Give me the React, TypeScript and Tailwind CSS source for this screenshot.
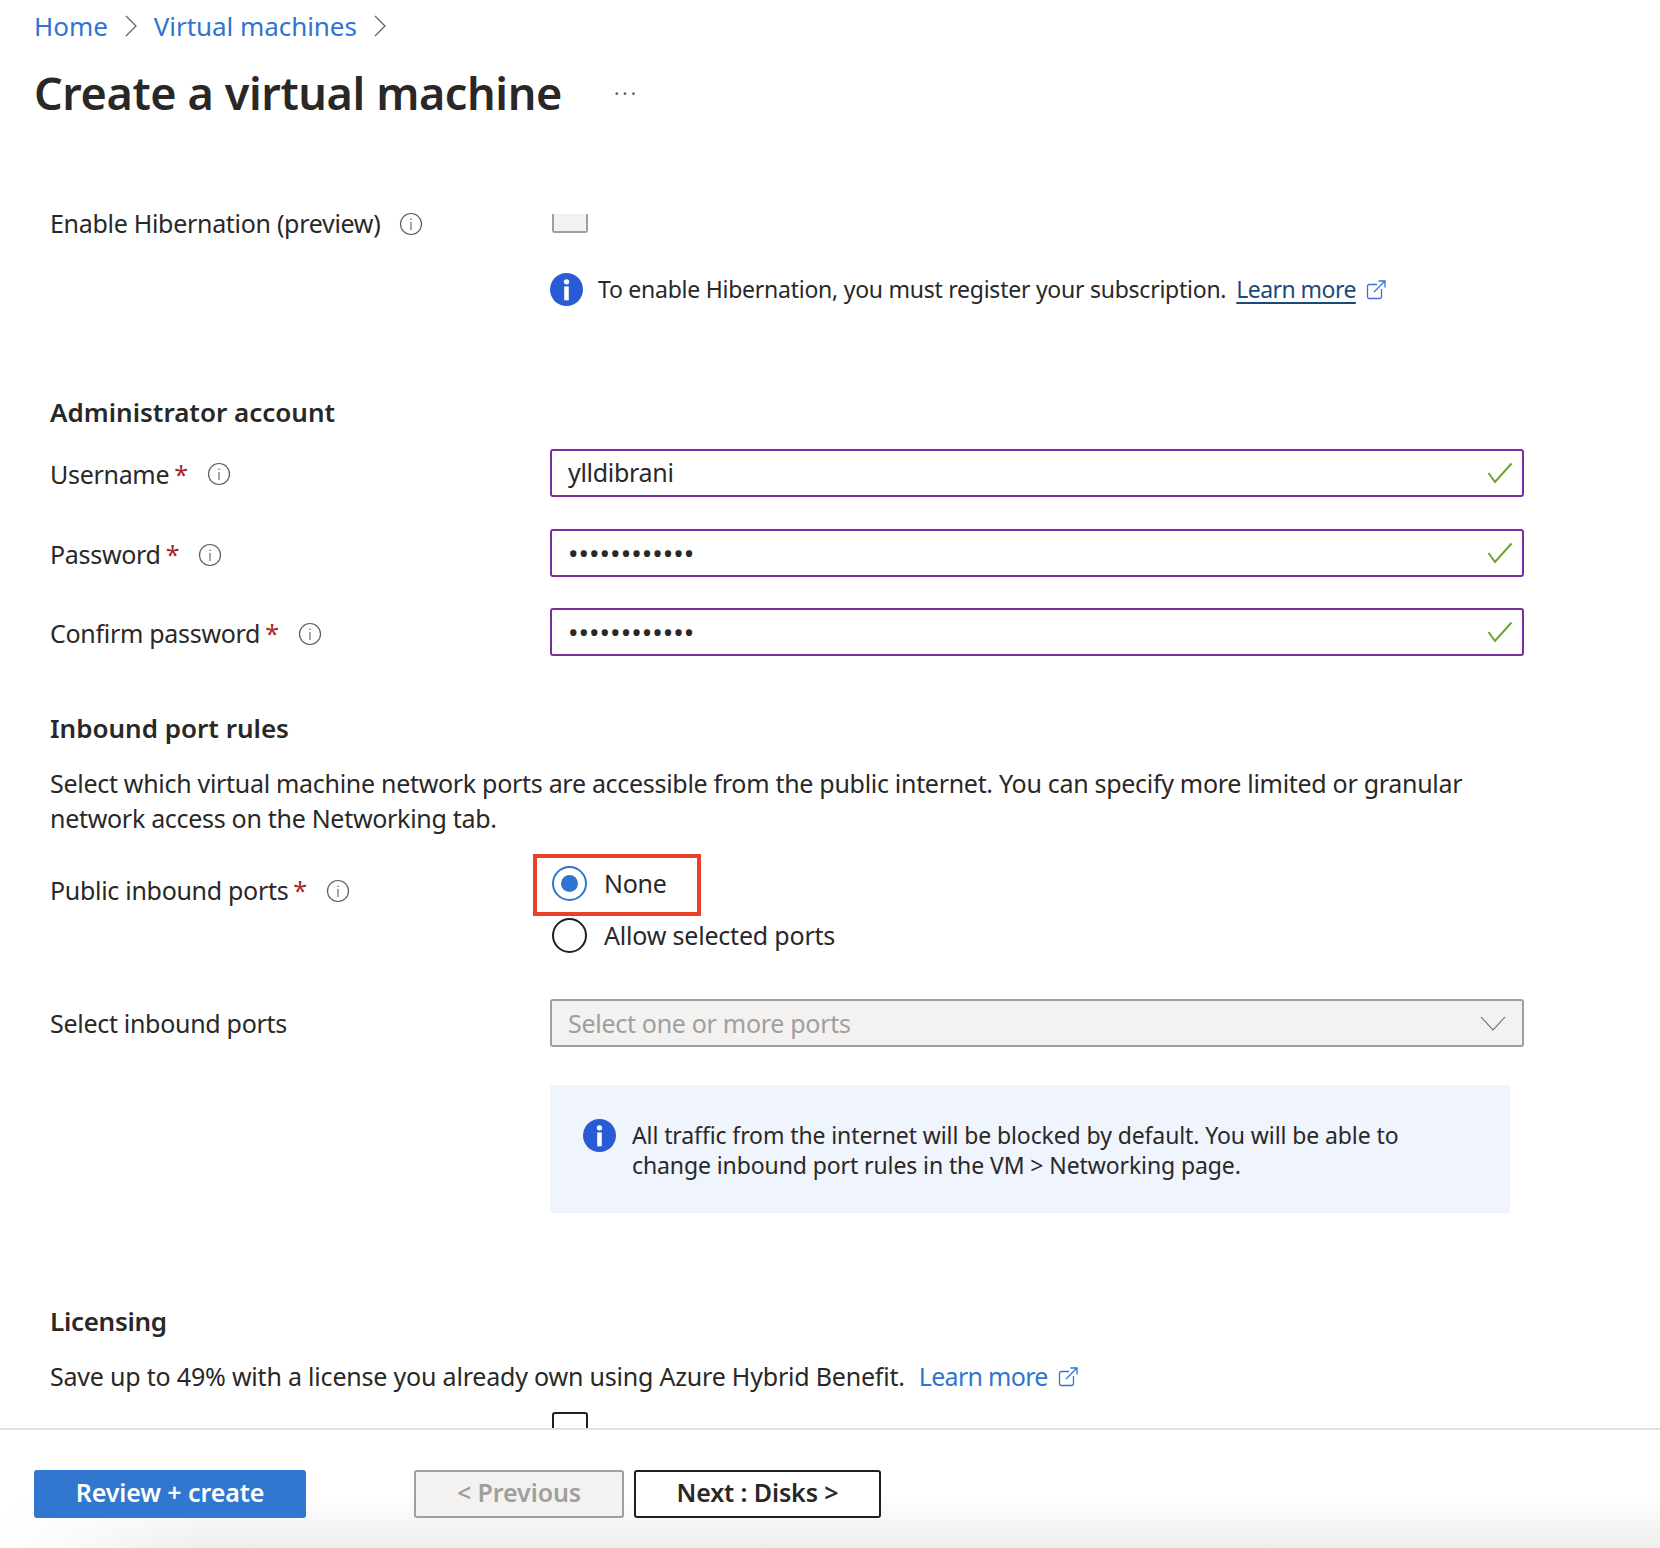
const font = "font-['Noto_Sans','Open_Sans',sans-serif]";

function SmallInfo() {
  return (
    <svg width="24" height="24" viewBox="0 0 24 24" fill="none" className="shrink-0">
      <circle cx="12" cy="12" r="10.5" stroke="#605e5c" strokeWidth="1.2" />
      <circle cx="12" cy="7.2" r="0.8" fill="#605e5c" />
      <path d="M12 10v8" stroke="#605e5c" strokeWidth="1.1" />
    </svg>
  );
}

function BlueInfo() {
  return (
    <svg width="33" height="33" viewBox="0 0 32 32" className="shrink-0">
      <circle cx="16" cy="16" r="16" fill="#285cd6" />
      <circle cx="16" cy="8.6" r="2.6" fill="#fff" />
      <rect x="13.8" y="13" width="4.4" height="13.5" fill="#fff" />
    </svg>
  );
}

function ExternalLink({ color = '#3b6fe0' }: { color?: string }) {
  return (
    <svg width="20" height="20" viewBox="0 0 20 20" fill="none" className="shrink-0">
      <path d="M11 4.500H3.200A1.700 1.700 0 0 0 1.500 6.200v10.600a1.700 1.700 0 0 0 1.700 1.700h10.600a1.700 1.700 0 0 0 1.700-1.700V9" stroke={color} strokeWidth="1.3" />
      <path d="M8 12 18.500 1.500M12.500 1h6.500v6.500" stroke={color} strokeWidth="1.3" />
    </svg>
  );
}

function Check() {
  return (
    <svg width="26" height="22" viewBox="0 0 26 22" fill="none">
      <path d="M1.500 11 8 20 24.500 1.500" stroke="#6aa232" strokeWidth="2" />
    </svg>
  );
}

function Chevron() {
  return (
    <svg width="16" height="26" viewBox="0 0 16 26" fill="none" className="shrink-0">
      <path d="M3 3 13 13 3 23" stroke="#605e5c" strokeWidth="1.200" />
    </svg>
  );
}

function FieldLabel({ text, required }: { text: string; required?: boolean }) {
  return (
    <div className="flex items-center gap-[19px]">
      <span>
        {text}
        {required && <span className="ml-[5px] text-[#a4262c]">*</span>}
      </span>
      <SmallInfo />
    </div>
  );
}

function ValidInput({ children }: { children: React.ReactNode }) {
  return (
    <div className="flex h-[48px] w-[974px] items-center justify-between rounded-[3px] border-2 border-[#7b2f9e] pl-[16px] pr-[9px]">
      {children}
      <Check />
    </div>
  );
}

function PasswordDots() {
  return <span className="text-[28px] tracking-normal">••••••••••••</span>;
}

export default function App() {
  return (
    <div className={`${font} flex h-[1548px] w-[1660px] flex-col overflow-hidden bg-white text-[25px] leading-[35px] tracking-[-0.3px] text-[#292827]`}>
      <main className="flex-1 overflow-hidden">
        <nav className="flex h-[52px] items-center gap-[15px] pl-[34px] text-[26px] tracking-[-0.05px] text-[#2f74d0]">
          <a>Home</a>
          <Chevron />
          <a>Virtual machines</a>
          <Chevron />
        </nav>
        <div className="mt-[11px] flex h-[60px] items-center pl-[34px]">
          <h1 className="text-[45px] font-semibold leading-[60px] tracking-[-0.4px]">Create a virtual machine</h1>
          <span className="ml-[52px] text-[20px] tracking-[3px] text-[#605e5c]">···</span>
        </div>

        <div className="pl-[50px]">
          <div className="mt-[83px] grid h-[35px] grid-cols-[500px_1fr] items-start">
            <FieldLabel text="Enable Hibernation (preview)" />
            <div className="ml-[2px] mt-[8px] h-[19px] w-[36px] rounded-b-[3px] border-2 border-t-0 border-[#a19f9d] bg-[#f3f2f1]" />
          </div>
          <div className="mt-[31px] flex h-[35px] items-center pl-[500px] text-[23px] tracking-[-0.25px]">
            <BlueInfo />
            <span className="ml-[15px]">To enable Hibernation, you must register your subscription.</span>
            <a className="ml-[10px] tracking-[-0.55px] text-[#1b4a7a] underline decoration-2 underline-offset-4">Learn more</a>
            <span className="ml-[10px]"><ExternalLink /></span>
          </div>

          <h2 className="mt-[88px] text-[26px] font-semibold tracking-normal">Administrator account</h2>
          <div className="mt-[19px] grid grid-cols-[500px_1fr] items-center">
            <div className="pt-[2px]"><FieldLabel text="Username" required /></div>
            <ValidInput><span className="-mt-[2px]">ylldibrani</span></ValidInput>
          </div>
          <div className="mt-[32px] grid grid-cols-[500px_1fr] items-center">
            <div className="pt-[3px]"><FieldLabel text="Password" required /></div>
            <ValidInput><PasswordDots /></ValidInput>
          </div>
          <div className="mt-[31px] grid grid-cols-[500px_1fr] items-center">
            <div className="pt-[3px]"><FieldLabel text="Confirm password" required /></div>
            <ValidInput><PasswordDots /></ValidInput>
          </div>

          <h2 className="mt-[55px] text-[26px] font-semibold tracking-normal">Inbound port rules</h2>
          <p className="mt-[20px] w-[1440px]">
            Select which virtual machine network ports are accessible from the public internet. You can specify more limited or granular network access on the Networking tab.
          </p>

          <div className="mt-[18px] grid grid-cols-[500px_1fr] items-start">
            <div className="mt-[19px]"><FieldLabel text="Public inbound ports" required /></div>
            <div className="-ml-[17px]">
              <div className="flex h-[62px] w-[168px] items-center border-4 border-[#e8412a] pb-[3px] pl-[15px]">
                <span className="flex h-[35px] w-[35px] items-center justify-center rounded-full border-2 border-[#2f74d0]">
                  <span className="h-[17px] w-[17px] rounded-full bg-[#2f74d0]" />
                </span>
                <span className="ml-[17px]">None</span>
              </div>
              <div className="mt-[2px] flex h-[35px] items-center pl-[19px]">
                <span className="h-[35px] w-[35px] rounded-full border-2 border-[#1f1f1f]" />
                <span className="ml-[17px] tracking-[-0.2px]">Allow selected ports</span>
              </div>
            </div>
          </div>

          <div className="mt-[46px] grid grid-cols-[500px_1fr] items-center">
            <span>Select inbound ports</span>
            <div className="flex h-[48px] w-[974px] items-center justify-between rounded-[3px] border-2 border-[#a19f9d] bg-[#f3f2f1] pl-[16px] pr-[16px] text-[#a19f9d]">
              <span>Select one or more ports</span>
              <svg width="26" height="15" viewBox="0 0 26 15" fill="none">
                <path d="M1 1 13 14 25 1" stroke="#605e5c" strokeWidth="1.100" />
              </svg>
            </div>
          </div>

          <div className="ml-[500px] mt-[38px] flex h-[128px] w-[960px] items-start rounded-[2px] bg-[#eff4fd] pl-[33px] pt-[34px] text-[23px] leading-[30px] tracking-[-0.1px]">
            <BlueInfo />
            <p className="ml-[16px] mt-[1px] w-[800px]">All traffic from the internet will be blocked by default. You will be able to change inbound port rules in the VM &gt; Networking page.</p>
          </div>

          <h2 className="mt-[91px] text-[26px] font-semibold">Licensing</h2>
          <div className="mt-[20px] flex items-center tracking-[-0.2px]">
            <span>Save up to 49% with a license you already own using Azure Hybrid Benefit.</span>
            <a className="ml-[14px] tracking-[-0.7px] text-[#2f74d0]">Learn more</a>
            <span className="ml-[10px]"><ExternalLink color="#2f74d0" /></span>
          </div>
          <div className="mt-[18px] grid grid-cols-[500px_1fr] items-start">
            <span className="mt-[8px] overflow-hidden whitespace-nowrap pr-[20px]">Would you like to use an existing Windows Server license?</span>
            <div className="ml-[2px] h-[36px] w-[36px] rounded-[3px] border-2 border-[#1f1f1f]" />
          </div>
        </div>
      </main>

      <footer className="flex h-[120px] shrink-0 items-start gap-[108px] border-t-2 border-[#e1e1e1] bg-[linear-gradient(to_right,#fff,transparent_12%),linear-gradient(to_bottom,#fff_55%,#eeeeee)] pl-[34px] pt-[40px] font-semibold tracking-[-0.1px]">
        <button className="h-[48px] w-[272px] rounded-[3px] bg-[#3277cf] pb-[3px] text-white">Review + create</button>
        <div className="flex gap-[10px]">
          <button className="h-[48px] w-[210px] rounded-[3px] border-2 border-[#a19f9d] bg-[#f3f2f1] pb-[3px] text-[#a19f9d]">&lt; Previous</button>
          <button className="h-[48px] w-[247px] rounded-[3px] border-2 border-[#1f1f1f] bg-white pb-[3px] text-[#292827]">Next : Disks &gt;</button>
        </div>
      </footer>
    </div>
  );
}
